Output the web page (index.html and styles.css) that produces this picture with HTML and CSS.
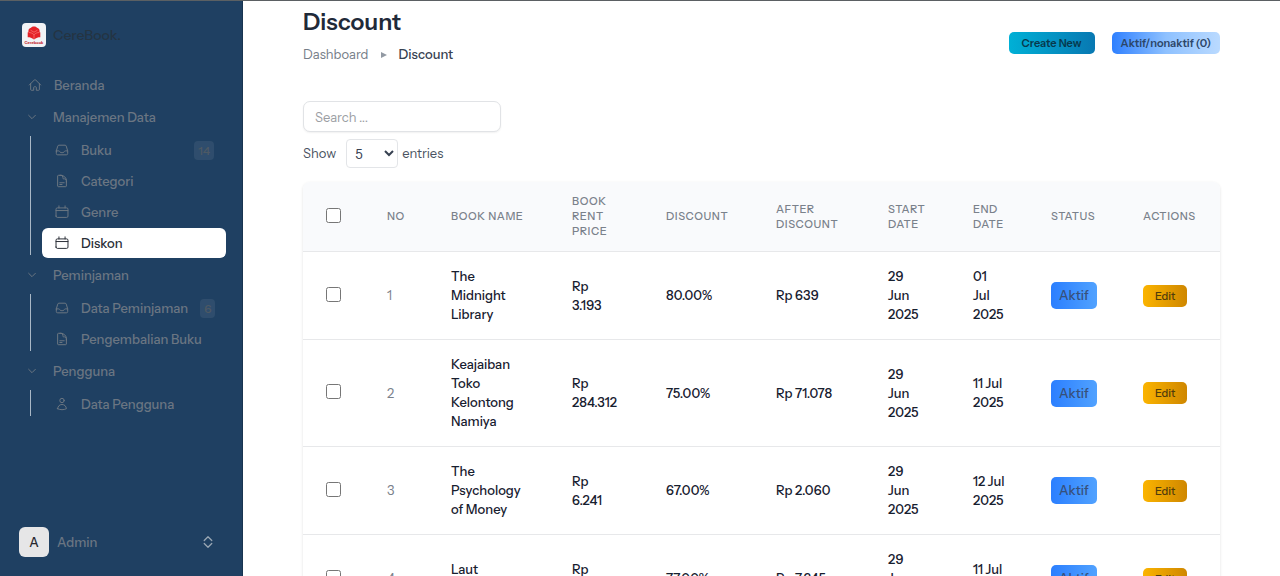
FILE: index.html
```html
<!DOCTYPE html>
<html lang="id">
<head>
<meta charset="utf-8">
<meta name="viewport" content="width=device-width, initial-scale=1">
<title>Discount - CereBook</title>
<link rel="stylesheet" href="styles.css">
</head>
<body>
<svg class="sprite" aria-hidden="true">
  <symbol id="i-home" viewBox="0 0 24 24"><path d="m2.25 12 8.95-8.95a1.1 1.1 0 0 1 1.6 0L21.75 12M4.5 9.75v10.1c0 .6.5 1.15 1.13 1.15H9.75v-4.9c0-.6.5-1.1 1.1-1.1h2.3c.6 0 1.1.5 1.1 1.1V21h4.1c.65 0 1.15-.5 1.15-1.1V9.75"/></symbol>
  <symbol id="i-down" viewBox="0 0 24 24"><path d="m2 7 10 10L22 7"/></symbol>
  <symbol id="i-inbox" viewBox="0 0 24 24"><path d="M2.25 13.5h3.9a2.2 2.2 0 0 1 2 1.2l.3.6a2.2 2.2 0 0 0 2 1.2h3.1a2.2 2.2 0 0 0 2-1.2l.3-.6a2.2 2.2 0 0 1 2-1.2h3.9M2.25 13.8V18a2.25 2.25 0 0 0 2.25 2.25h15A2.25 2.25 0 0 0 21.75 18v-4.2c0-.2 0-.4-.1-.6L19.24 5.3A2.25 2.25 0 0 0 17.1 3.75H6.9a2.25 2.25 0 0 0-2.15 1.55L2.35 13.2c-.1.2-.1.4-.1.6Z"/></symbol>
  <symbol id="i-doc" viewBox="0 0 24 24"><path d="M19.5 14.25v-2.6a3.4 3.4 0 0 0-3.4-3.4h-1.5a1.1 1.1 0 0 1-1.1-1.1v-1.5a3.4 3.4 0 0 0-3.4-3.4H8.25m0 12.75h7.500m-7.500 3H12M10.500 2.250H5.600c-.6 0-1.100.5-1.100 1.100v17.300c0 .6.5 1.100 1.100 1.100h12.800c.6 0 1.100-.5 1.100-1.100v-9.400a9 9 0 0 0-9-9Z"/></symbol>
  <symbol id="i-cal" viewBox="0 0 24 24"><path d="M6.750 1.500v3.500m10.500-3.500v3.500M1.750 19V7.250A2.250 2.250 0 0 1 4 5h16a2.250 2.250 0 0 1 2.250 2.250V19A2.250 2.250 0 0 1 20 21.250H4A2.250 2.250 0 0 1 1.750 19ZM1.750 9.500h20.500"/></symbol>
  <symbol id="i-user" viewBox="0 0 24 24"><path d="M15.750 6a3.750 3.750 0 1 1-7.500 0 3.750 3.750 0 0 1 7.500 0ZM4.500 20.100c.1-4 3.300-7.300 7.500-7.300s7.400 3.300 7.500 7.300A18 18 0 0 1 12 21.750c-2.700 0-5.200-.6-7.500-1.650Z"/></symbol>
  <symbol id="i-updown" viewBox="0 0 24 24"><path d="M4.500 9 12 1.500 19.500 9M4.500 15l7.500 7.500 7.500-7.500"/></symbol>
</svg>
<div class="app">
  <aside class="sidebar">
    <a class="brand" href="#">
      <svg class="logo" viewBox="0 0 24 24" aria-hidden="true">
        <rect width="24" height="24" rx="4" fill="#f1f3f6"/>
        <path fill="#e42127" d="M6.500 8.500C6 6.500 7.500 5 9 4.800 10 3.200 14 3.200 15 4.800c1.500.2 3 1.700 2.500 3.700l.8 1v4.700c-2.300 0-4 .4-6.300 2.300-2.300-1.900-4-2.300-6.300-2.300V9.500Z"/>
        <path fill="none" stroke="#ff8a86" stroke-width=".6" d="M6.500 9.500c2.300 0 4 .7 5.500 2.300 1.500-1.600 3.200-2.300 5.500-2.300M8.500 7.200l3.500 2 3.500-2M12 11.800v4.500"/>
        <text class="logo-name" x="12" y="20.500" text-anchor="middle">Cerebook</text>
      </svg>
      <span>CereBook.</span>
    </a>
    <nav class="nav">
      <a class="item" href="#"><svg class="icon"><use href="#i-home"/></svg><span>Beranda</span></a>
      <section>
        <button class="item heading" type="button"><svg class="chevron"><use href="#i-down"/></svg><span>Manajemen Data</span></button>
        <ul class="group">
          <li><a class="item" href="#"><svg class="icon"><use href="#i-inbox"/></svg><span>Buku</span><span class="badge">14</span></a></li>
          <li><a class="item" href="#"><svg class="icon"><use href="#i-doc"/></svg><span>Categori</span></a></li>
          <li><a class="item" href="#"><svg class="icon"><use href="#i-cal"/></svg><span>Genre</span></a></li>
          <li><a class="item active" href="#" aria-current="page"><svg class="icon"><use href="#i-cal"/></svg><span>Diskon</span></a></li>
        </ul>
      </section>
      <section>
        <button class="item heading" type="button"><svg class="chevron"><use href="#i-down"/></svg><span>Peminjaman</span></button>
        <ul class="group">
          <li><a class="item" href="#"><svg class="icon"><use href="#i-inbox"/></svg><span>Data Peminjaman</span><span class="badge">6</span></a></li>
          <li><a class="item" href="#"><svg class="icon"><use href="#i-doc"/></svg><span>Pengembalian Buku</span></a></li>
        </ul>
      </section>
      <section>
        <button class="item heading" type="button"><svg class="chevron"><use href="#i-down"/></svg><span>Pengguna</span></button>
        <ul class="group">
          <li><a class="item" href="#"><svg class="icon"><use href="#i-user"/></svg><span>Data Pengguna</span></a></li>
        </ul>
      </section>
    </nav>
    <button class="profile" type="button">
      <span class="avatar">A</span><span>Admin</span>
      <svg class="updown"><use href="#i-updown"/></svg>
    </button>
  </aside>

  <main class="main">
    <header class="page-head">
      <div>
        <h1 class="title">Discount</h1>
        <nav class="crumbs" aria-label="Breadcrumb">
          <a href="#">Dashboard</a>
          <svg class="crumb-arrow" viewBox="0 0 6 6" aria-hidden="true"><path d="M0 0 6 3 0 6Z"/></svg>
          <span class="current">Discount</span>
        </nav>
      </div>
      <div class="head-actions">
        <button class="btn create" type="button">Create New</button>
        <button class="btn toggle" type="button">Aktif/nonaktif (0)</button>
      </div>
    </header>

    <input class="search" type="search" placeholder="Search ..." aria-label="Search">
    <div class="entries">
      <label for="entries">Show</label>
      <select class="select" id="entries"><option>5</option><option>10</option><option>25</option></select>
      <span>entries</span>
    </div>

    <div class="card">
      <table class="table">
        <colgroup>
          <col class="c-check"><col class="c-no"><col class="c-name"><col class="c-rent"><col class="c-disc"><col class="c-after"><col class="c-start"><col class="c-end"><col class="c-status"><col class="c-act">
        </colgroup>
        <thead>
          <tr>
            <th><input class="check" type="checkbox" aria-label="Select all"></th>
            <th>No</th><th>Book Name</th><th>Book Rent Price</th><th>Discount</th><th>After Discount</th><th>Start Date</th><th>End Date</th><th>Status</th><th>Actions</th>
          </tr>
        </thead>
        <tbody>
          <tr>
            <td><input class="check" type="checkbox" aria-label="Select row 1"></td>
            <td class="no">1</td><td>The Midnight Library</td><td>Rp<br>3.193</td><td>80.00%</td><td>Rp 639</td>
            <td>29<br>Jun<br>2025</td><td>01<br>Jul<br>2025</td>
            <td><span class="status">Aktif</span></td><td><button class="btn edit" type="button">Edit</button></td>
          </tr>
          <tr>
            <td><input class="check" type="checkbox" aria-label="Select row 2"></td>
            <td class="no">2</td><td>Keajaiban Toko Kelontong Namiya</td><td>Rp<br>284.312</td><td>75.00%</td><td>Rp 71.078</td>
            <td>29<br>Jun<br>2025</td><td>11 Jul<br>2025</td>
            <td><span class="status">Aktif</span></td><td><button class="btn edit" type="button">Edit</button></td>
          </tr>
          <tr>
            <td><input class="check" type="checkbox" aria-label="Select row 3"></td>
            <td class="no">3</td><td>The Psychology of Money</td><td>Rp<br>6.241</td><td>67.00%</td><td>Rp 2.060</td>
            <td>29<br>Jun<br>2025</td><td>12 Jul<br>2025</td>
            <td><span class="status">Aktif</span></td><td><button class="btn edit" type="button">Edit</button></td>
          </tr>
          <tr>
            <td><input class="check" type="checkbox" aria-label="Select row 4"></td>
            <td class="no">4</td><td>Laut<br>Bercerita</td><td>Rp<br>31.500</td><td>77.00%</td><td>Rp 7.245</td>
            <td>29<br>Jun<br>2025</td><td>11 Jul<br>2025</td>
            <td><span class="status">Aktif</span></td><td><button class="btn edit" type="button">Edit</button></td>
          </tr>
        </tbody>
      </table>
    </div>
  </main>
</div>
</body>
</html>
```
FILE: styles.css
```css
* { box-sizing: border-box; }
body {
  margin: 0;
  font-family: "Instrument Sans", Inter, "Liberation Sans", sans-serif;
  font-size: 13px;
  line-height: 19px;
  color: #17202f;
  background: #fff;
}
a { color: inherit; text-decoration: none; }
button { font: inherit; color: inherit; border: 0; background: none; padding: 0; cursor: pointer; }
.sprite { display: none; }

.app { display: flex; height: 100vh; border-top: 1px solid #5b6063; overflow: hidden; }

/* Sidebar */
.sidebar {
  flex: 0 0 243px;
  min-width: 0;
  display: flex;
  flex-direction: column;
  padding: 19px 16px 19px 19px;
  background: #1f4062;
  border-right: 1px solid #183450;
  color: #6b7682;
  font-weight: 500;
}
.brand { display: flex; align-items: center; gap: 7px; height: 30px; padding-left: 3px; color: #243443; font-size: 14px; }
.logo { width: 24px; height: 24px; }
.logo-name { font-size: 4px; font-weight: 700; fill: #c4242c; }
.nav { display: flex; flex-direction: column; gap: 2px; margin-top: 20px; }
.item { display: flex; align-items: center; gap: 12px; width: 100%; height: 30px; padding: 0 12px 0 9px; border-radius: 6px; text-align: left; white-space: nowrap; }
.icon, .chevron, .updown { flex: none; fill: none; stroke: currentColor; stroke-width: 1.7; stroke-linecap: round; stroke-linejoin: round; }
.icon { width: 14px; height: 14px; }
.chevron { width: 8px; height: 8px; stroke-width: 3; }
.heading { gap: 17px; }
.group {
  display: flex;
  flex-direction: column;
  gap: 1px;
  margin: 3px 0 0 11px;
  padding: 0 0 0 12px;
  list-style: none;
  background: linear-gradient(#a9b8c6, #a9b8c6) no-repeat 0 1px / 1px calc(100% - 4px);
}
.group .item { padding-left: 13px; }
.active { color: #2a2f37; background: #fff; }
.badge { margin-left: auto; padding: 0 4px; border-radius: 4px; background: #2f4d6d; color: #4d5964; font-size: 12px; line-height: 19px; }
.profile { display: flex; align-items: center; gap: 8px; margin-top: auto; padding-right: 12px; }
.avatar { display: grid; place-items: center; width: 30px; height: 30px; border-radius: 6px; background: #e6e6e7; color: #26292e; }
.updown { width: 12px; height: 12px; margin-left: auto; color: #9aa7b4; stroke-width: 2.5; }

/* Page */
.main { flex: 1; min-width: 0; padding: 7px 60px; overflow-y: auto; scrollbar-width: none; }
.page-head { display: flex; justify-content: space-between; align-items: center; }
.title { margin: 0; font-size: 23px; line-height: 28px; font-weight: 600; color: #1f2a39; }
.crumbs { display: flex; align-items: center; gap: 12px; margin-top: 9px; color: #757d88; }
.crumb-arrow { width: 6px; height: 6px; fill: #9299a3; }
.current { color: #374151; font-weight: 500; }
.head-actions { display: flex; gap: 17px; margin-top: 14px; }
.btn { height: 22px; border-radius: 5px; font-size: 11px; line-height: 16px; font-weight: 600; white-space: nowrap; }
.create { padding: 0 13px; color: #07394d; background: linear-gradient(to right, #00b0d6, #0878b2); }
.toggle { padding: 0 9px; color: #2c4668; background: linear-gradient(to right, #2f80ff, #8ec1ff 50%, #badaff); }

.search {
  display: block;
  width: 198px;
  height: 31px;
  margin-top: 37px;
  padding: 0 11px;
  border: 1px solid #e1e3e6;
  border-radius: 7px;
  box-shadow: 0 1px 2px #0000000f;
  font: inherit;
  background: #fff;
}
.search::placeholder { color: #9b9ea3; }
.entries { display: flex; align-items: center; margin-top: 7px; color: #4a5361; }
.select { width: 52px; height: 29px; margin: 0 4px 0 10px; padding: 0 0 0 4px; border: 1px solid #e3e5e8; border-radius: 4px; background: #fff; color: #374151; font: inherit; }

.card { margin-top: 14px; border-radius: 7px; overflow: hidden; box-shadow: 0 1px 3px #0000001f; }
.table { width: 100%; table-layout: fixed; border-collapse: separate; border-spacing: 0; }
.c-check { width: 61px; }
.c-no { width: 64px; }
.c-name { width: 121px; }
.c-rent { width: 94px; }
.c-disc { width: 110px; }
.c-after { width: 112px; }
.c-start { width: 85px; }
.c-end { width: 78px; }
.c-status { width: 92px; }
.c-act { width: 100px; }
.table th, .table td { padding: 15px 22px 15px 23px; text-align: left; vertical-align: middle; border-bottom: 1px solid #e7e8ea; font-weight: 500; }
.table th { padding-top: 12px; padding-bottom: 12px; background: #f9fafc; color: #7a818b; font-size: 11px; line-height: 15px; letter-spacing: 0.05em; text-transform: uppercase; }
.table .no { color: #7a818b; font-weight: 400; }
.check { display: block; width: 15px; height: 15px; margin: 0 0 3px; }
.status { display: inline-block; padding: 4px 8px; border-radius: 5px; color: #37507a; background: linear-gradient(to right, #2b7fff, #51a2ff); }
.edit { display: block; padding: 0 12px; color: #4f3c0c; background: linear-gradient(to right, #fbb400, #cf8700); font-weight: 500; }
```
